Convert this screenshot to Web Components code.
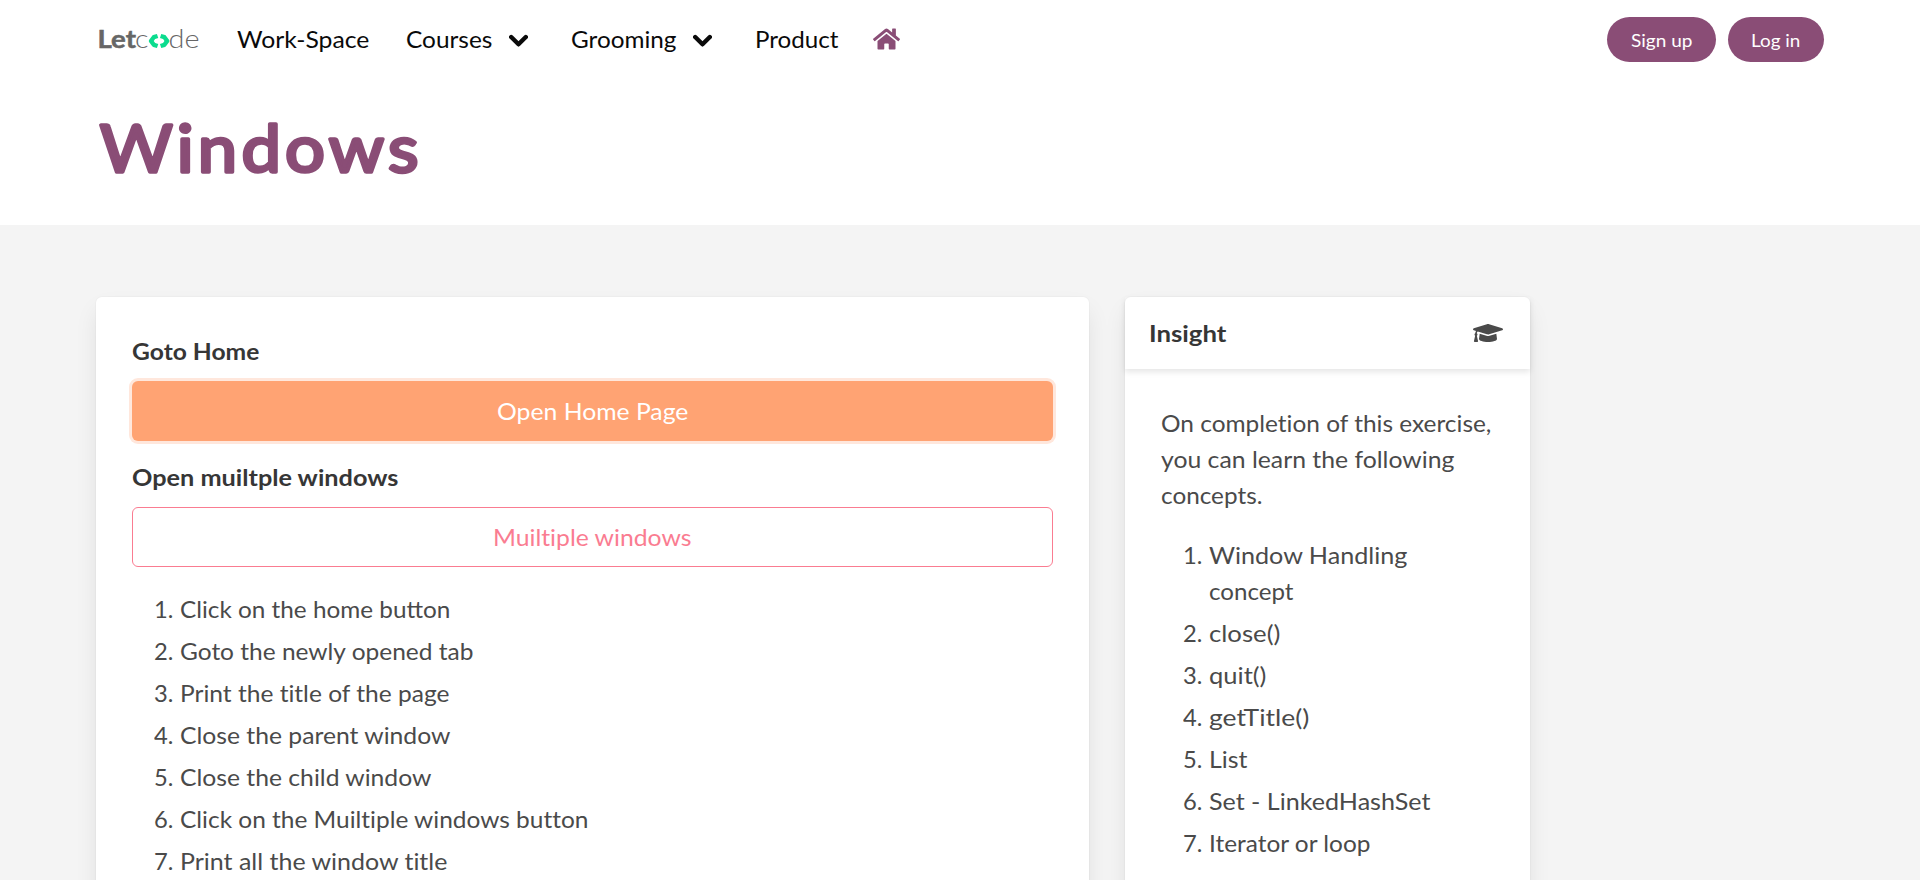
<!DOCTYPE html>
<html lang="en">
<head>
<meta charset="utf-8">
<title>Windows</title>
<style>
body{margin:0;background:#f4f4f4;font:23.5px/36px Lato,"Noto Sans",sans-serif;color:#4a4a4a;height:880px;overflow:hidden}
</style>
</head>
<body>
<letcode-page></letcode-page>
<script>
const define = (name, html, setup) => customElements.define(name, class extends HTMLElement {
  connectedCallback() {
    if (this.shadowRoot) return;
    const t = document.createElement('template');
    t.innerHTML = html;
    this.attachShadow({mode: 'open'}).append(t.content.cloneNode(true));
    if (setup) setup(this, this.shadowRoot);
  }
});

// A single line of text stretched to the width given in "w".
define('fit-text', `<style>:host{display:block;flex:none;height:36px;line-height:36px;white-space:nowrap;font-variant-ligatures:none}:host([liga]){font-variant-ligatures:normal}span{display:inline-block;transform-origin:0 0}</style><span><slot></slot></span>`,
  (el, root) => {
    const span = root.querySelector('span'), w = +el.getAttribute('w');
    el.style.width = w + 'px';
    span.style.transform = 'scaleX(' + (w - .6) / span.getBoundingClientRect().width + ')';
  });

define('lc-logo', `<style>:host{display:block;flex:none;width:102px;height:36px}svg{display:block}</style>
<svg width="102" height="36" font-family="Lato, sans-serif" fill="#666">
<text x="-0.6" y="26.8" font-size="25" font-weight="700" stroke="#666" stroke-width=".5" textLength="38.5" lengthAdjust="spacingAndGlyphs">Let</text>
<text x="37" y="26.8" font-size="25" font-weight="300" textLength="13.5" lengthAdjust="spacingAndGlyphs">c</text>
<path d="M59.6 15 55.8 16.2 53 20 55.8 23.8 59.6 25M62.6 15 66.4 16.2 69.2 20 66.4 23.8 62.6 25" fill="none" stroke="#0bdc8e" stroke-width="4.4" stroke-linejoin="round"/>
<text x="70.6" y="26.8" font-size="25" font-weight="300" textLength="31" lengthAdjust="spacingAndGlyphs">de</text>
</svg>`);

define('lc-chevron', `<style>:host{display:block;flex:none;width:19px;height:14px}svg{display:block}</style>
<svg width="19" height="14"><path d="M2.2 3 9.5 10.3 16.8 3" fill="none" stroke="#0a0a0a" stroke-width="4.4" stroke-linecap="round" stroke-linejoin="round"/></svg>`);

define('lc-home', `<style>:host{display:block;flex:none;color:#8a4d76}svg{display:block}</style>
<svg width="27" height="24" viewBox="0 0 576 512" fill="currentColor"><path d="M280.37 148.26L96 300.11V464a16 16 0 0 0 16 16l112.06-.29a16 16 0 0 0 15.92-16V368a16 16 0 0 1 16-16h64a16 16 0 0 1 16 16v95.64a16 16 0 0 0 16 16.05L464 480a16 16 0 0 0 16-16V300L295.67 148.26a12.19 12.19 0 0 0-15.3 0zM571.6 251.47L488 182.56V44.05a12 12 0 0 0-12-12h-56a12 12 0 0 0-12 12v72.61L318.47 43a48 48 0 0 0-61 0L4.34 251.47a12 12 0 0 0-1.6 16.9l25.5 31A12 12 0 0 0 45.15 301l235.22-193.74a12.19 12.19 0 0 1 15.3 0L530.9 301a12 12 0 0 0 16.9-1.6l25.5-31a12 12 0 0 0-1.7-16.93z"/></svg>`);

define('lc-cap', `<style>:host{display:block;flex:none}svg{display:block}</style>
<svg width="30" height="24" viewBox="0 0 640 512" fill="#4a4a4a"><path d="M622.34 153.2L343.4 67.5c-15.2-4.67-31.6-4.67-46.79 0L17.66 153.2c-23.54 7.23-23.54 38.36 0 45.59l48.63 14.94c-10.67 13.19-17.23 29.28-17.88 46.9C38.78 266.15 32 276.11 32 288c0 10.78 5.68 19.85 13.86 25.65L20.33 428.53C18.11 438.52 25.71 448 35.94 448h56.11c10.24 0 17.84-9.48 15.62-19.47L82.14 313.65C90.32 307.85 96 298.78 96 288c0-11.57-6.47-21.25-15.66-26.87.76-15.02 8.44-28.3 20.69-36.72L296.6 284.5c9.06 2.78 26.44 6.25 46.79 0l278.95-85.7c23.55-7.24 23.55-38.36 0-45.6zM352.79 315.09c-28.53 8.76-52.84 3.92-65.59 0l-145.02-44.55L128 384c0 35.35 85.96 64 192 64s192-28.65 192-64l-14.18-113.47-145.03 44.56z"/></svg>`);

define('lc-pill', `<style>:host{display:flex;flex:none;box-sizing:border-box;height:45px;padding-top:5px;justify-content:center;background:#8a4d76;color:#fff;border-radius:23px;font-size:17.8px}</style><slot></slot>`);

define('lc-navbar', `<style>
:host{display:flex;align-items:center;box-sizing:border-box;height:78px;padding:0 96px 0 98px;color:#0a0a0a}
.work{margin-left:37px}.courses{margin-left:36px}.grooming,.product{margin-left:43px}
lc-chevron{margin:3px 0 0 16px}lc-home{margin-left:34px}
.actions{display:flex;gap:12px;margin-left:auto}
.signup{width:109px}.login{width:96px}
</style>
<lc-logo></lc-logo>
<fit-text class="work" w="133">Work-Space</fit-text>
<fit-text class="courses" w="87">Courses</fit-text><lc-chevron></lc-chevron>
<fit-text class="grooming" w="106">Grooming</fit-text><lc-chevron></lc-chevron>
<fit-text class="product" w="84">Product</fit-text>
<lc-home></lc-home>
<div class="actions"><lc-pill class="signup"><fit-text w="62">Sign up</fit-text></lc-pill><lc-pill class="login"><fit-text w="50">Log in</fit-text></lc-pill></div>`);

define('lc-title', `<style>:host{display:block;padding:18px 96px 0}svg{display:block}</style>
<svg width="340" height="108"><text x="3.8" y="76" font-family="Lato, sans-serif" font-size="66.5" fill="#8a4d76" stroke="#8a4d76" stroke-width="3.4" stroke-linejoin="round" textLength="323" lengthAdjust="spacingAndGlyphs" letter-spacing="4">Windows</text></svg>`);

define('lc-button', `<style>:host{display:flex;justify-content:center;box-sizing:border-box;height:60px;padding-top:12px;border-radius:6px}
:host([kind=solid]){background:#ffa373;color:#fff;box-shadow:0 0 0 3px #ffe7dc}
:host([kind=outline]){padding-top:11px;border:1px solid #fa7c91;color:#fa7c91}</style><slot></slot>`);

define('lc-item', `<style>:host{display:flex}.n{margin:0 6px 0 -26px}</style><fit-text class="n" w="20"></fit-text><div><slot></slot></div>`,
  (el, root) => {
    const old = root.querySelector('.n'), n = document.createElement('fit-text');
    n.className = 'n'; n.setAttribute('w', '20');
    n.textContent = el.getAttribute('n') + '.';
    old.replaceWith(n);
  });

define('lc-list', `<style>:host{display:flex;flex-direction:column;gap:6px;margin:24px 0 0 48px}</style><slot></slot>`);

define('lc-card', `<style>:host{display:block;box-sizing:border-box;height:640px;background:#fff;border-radius:6px;box-shadow:0 12px 24px -3px rgba(10,10,10,.1),0 0 0 1px rgba(10,10,10,.02)}
::slotted([slot=head]){display:flex;align-items:center;justify-content:space-between;height:72px;padding:0 27px 0 24px;box-shadow:0 3px 6px rgba(10,10,10,.1);color:#363636;font-weight:700}
.body{padding:36px}</style><slot name="head"></slot><div class="body"><slot></slot></div>`);

define('letcode-page', `<style>
:host{display:block;height:880px;overflow:hidden}
header{height:225px;background:#fff}
main{display:grid;grid-template-columns:993px 405px;gap:36px;box-sizing:border-box;height:655px;overflow:hidden;padding:72px 96px 0}
.label{color:#363636;font-weight:700;margin-bottom:12px}
lc-button + .label{margin-top:18px}
</style>
<header><lc-navbar></lc-navbar><lc-title></lc-title></header>
<main>
<lc-card>
<fit-text class="label" w="128">Goto Home</fit-text>
<lc-button kind="solid"><fit-text w="192">Open Home Page</fit-text></lc-button>
<fit-text class="label" w="267">Open muiltple windows</fit-text>
<lc-button kind="outline"><fit-text w="199">Muiltiple windows</fit-text></lc-button>
<lc-list>
<lc-item n="1"><fit-text liga w="271">Click on the home button</fit-text></lc-item>
<lc-item n="2"><fit-text w="294">Goto the newly opened tab</fit-text></lc-item>
<lc-item n="3"><fit-text w="270">Print the title of the page</fit-text></lc-item>
<lc-item n="4"><fit-text w="271">Close the parent window</fit-text></lc-item>
<lc-item n="5"><fit-text w="252">Close the child window</fit-text></lc-item>
<lc-item n="6"><fit-text w="409">Click on the Muiltiple windows button</fit-text></lc-item>
<lc-item n="7"><fit-text w="268">Print all the window title</fit-text></lc-item>
</lc-list>
</lc-card>
<lc-card>
<div slot="head"><fit-text w="78">Insight</fit-text><lc-cap></lc-cap></div>
<fit-text w="331">On completion of this exercise,</fit-text>
<fit-text w="294">you can learn the following</fit-text>
<fit-text w="102">concepts.</fit-text>
<lc-list>
<lc-item n="1"><fit-text w="199">Window Handling</fit-text><fit-text w="85">concept</fit-text></lc-item>
<lc-item n="2"><fit-text w="72">close()</fit-text></lc-item>
<lc-item n="3"><fit-text w="58">quit()</fit-text></lc-item>
<lc-item n="4"><fit-text w="101">getTitle()</fit-text></lc-item>
<lc-item n="5"><fit-text w="39">List</fit-text></lc-item>
<lc-item n="6"><fit-text w="222">Set - LinkedHashSet</fit-text></lc-item>
<lc-item n="7"><fit-text w="162">Iterator or loop</fit-text></lc-item>
</lc-list>
</lc-card>
</main>`);
</script>
</body>
</html>
